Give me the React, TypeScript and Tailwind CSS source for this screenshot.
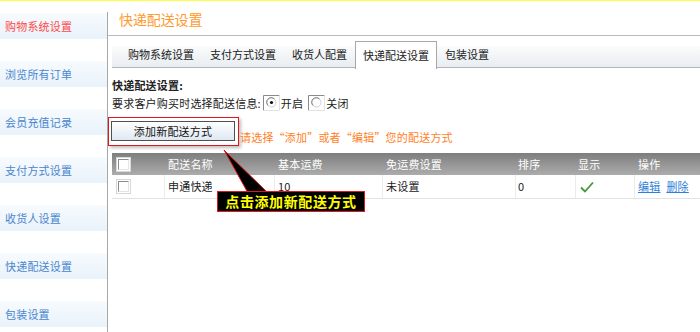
const font = { fontFamily: '"Noto Sans CJK SC", "Liberation Sans", sans-serif' };

const menu = ['购物系统设置', '浏览所有订单', '会员充值记录', '支付方式设置', '收货人设置', '快递配送设置', '包装设置'];
const tabs = ['购物系统设置', '支付方式设置', '收货人配置', '快递配送设置', '包装设置'];

function Radio({ on }: { on?: boolean }) {
  return (
    <svg width="17" height="16" viewBox="0 0 17 16" className="shrink-0">
      <rect x="0" y="0" width="17" height="16" fill="#fff" />
      <path d="M0.5 15.5V0.5H16.5" stroke="#8a8a8a" fill="none" />
      <path d="M16.5 0.5V15.5H0.5" stroke="#e2e2e2" fill="none" />
      <circle cx="8.5" cy="7.5" r="4.5" fill="#fff" stroke="#d0d0d0" />
      <path d="M5 10.5A4.5 4.5 0 0 1 11.5 4" stroke="#808080" fill="none" />
      {on && <circle cx="8.5" cy="7.5" r="1.6" fill="#111" />}
    </svg>
  );
}

function Check() {
  return (
    <span className="flex h-[15px] w-[15px] items-center justify-center border border-[#d8d8d8] bg-white">
      <span className="h-[11px] w-[11px] border border-[#8c8c8c] border-b-[#e4e4e4] border-r-[#e4e4e4] bg-white" />
    </span>
  );
}

export default function App() {
  return (
    <div className="relative h-[332px] w-[700px] overflow-hidden bg-white text-[11px] tracking-[0.2px] text-[#222]" style={font}>
      <div className="h-px bg-[#ffff40]" />
      <div className="flex">
        <div className="flex w-[107px] shrink-0 flex-col gap-[22px] pt-[12px]">
          {menu.map((m, i) => (
            <div
              key={m}
              className={`flex h-[26px] items-center bg-gradient-to-b from-[#f7fbfe] to-[#e9f2fa] pl-[5px] ${i === 0 ? 'text-[#ff4a4a]' : 'text-[#4a86cf]'}`}
            >
              {m}
            </div>
          ))}
        </div>
        <div className="mt-[11px] h-[320px] flex-1 border-l border-[#a8a8a8]">
          <div className="h-[24px] border-b border-[#bcbcbc] pl-[11px] text-[14px] leading-[14px] tracking-[-0.1px] text-[#ff9a2e]">
            快递配送设置
          </div>
          <div className="ml-[4px] mt-[5px] flex h-[27px] items-start border-b border-[#b4b4b4] bg-[linear-gradient(to_bottom,#fff_0,#fff_5px,#fafbfc_5px,#e9edf1_100%)] pl-[8px] tracking-normal">
            {tabs.map((t, i) =>
              i === 3 ? (
                <div key={t} className="flex h-[28px] items-center border border-b-0 border-[#a8a8a8] bg-white px-[7px] pb-px">
                  {t}
                </div>
              ) : (
                <div key={t} className="flex h-[26px] items-center px-[8px] pt-[1px]">
                  {t}
                </div>
              ),
            )}
          </div>
          <div className="pl-[4px] pt-[8px] leading-[18px]">
            <div className="font-bold">快递配送设置:</div>
            <div className="flex items-center">
              <span>要求客户购买时选择配送信息:</span>
              <span className="ml-[2px] flex items-center gap-[1px]">
                <Radio on />
                <span>开启</span>
              </span>
              <span className="ml-[5px] flex items-center gap-[1px]">
                <Radio />
                <span>关闭</span>
              </span>
            </div>
          </div>
          <div className="mt-[5px] flex items-start">
            <div className="h-[29px] w-[131px] border border-[#e0161c] pl-[2px] pr-[3px] pt-[3px] shadow-[2px_2px_3px_rgba(0,0,0,0.25)]">
              <div className="flex h-[20px] items-center justify-center border border-[#505050] bg-gradient-to-b from-[#ffffff] to-[#dfe8f2] text-[#111]">
                添加新配送方式
              </div>
            </div>
            <div className="ml-[1px] mt-[12px] leading-[16px] text-[#ff7f27]">请选择“添加”或者“编辑”您的配送方式</div>
          </div>
          <div className="ml-[4px] mt-[7px]">
            <div className="grid h-[22px] grid-cols-[53px_110px_108px_133px_60px_59px_1fr] items-center bg-gradient-to-b from-[#7e7e7e] to-[#acacac] text-white">
              <div className="pl-[4px]">
                <Check />
              </div>
              <div className="pl-[3px]">配送名称</div>
              <div className="pl-[3px]">基本运费</div>
              <div className="pl-[3px]">免运费设置</div>
              <div className="pl-[2px]">排序</div>
              <div className="pl-[2px]">显示</div>
              <div className="pl-[3px]">操作</div>
            </div>
            <div className="grid h-[24px] grid-cols-[53px_110px_108px_133px_60px_59px_1fr] border-b border-[#e2e2e2] text-[#222]">
              <div className="flex items-center border-r border-[#ececec] pl-[4px]">
                <Check />
              </div>
              <div className="flex items-center border-r border-[#ececec] pl-[3px]">申通快递</div>
              <div className="flex items-center border-r border-[#ececec] pl-[3px]">10</div>
              <div className="flex items-center border-r border-[#ececec] pl-[3px]">未设置</div>
              <div className="flex items-center border-r border-[#ececec] pl-[2px]">0</div>
              <div className="flex items-center border-r border-[#ececec] pl-[4px]">
                <svg width="14" height="12" viewBox="0 0 14 12">
                  <path d="M1 6.5L5 10.5L13 1.5" stroke="#3f9a3c" strokeWidth="1.8" fill="none" />
                </svg>
              </div>
              <div className="flex items-center gap-[6px] pl-[3px] text-[#2f7fd8] underline">
                <span>编辑</span>
                <span>删除</span>
              </div>
            </div>
          </div>
        </div>
      </div>
      <svg className="absolute left-0 top-0" width="700" height="332" viewBox="0 0 700 332" style={{ pointerEvents: 'none' }}>
        <polygon points="224,150 248,193 268,193" fill="#000" stroke="#e0161c" strokeWidth="1" />
      </svg>
      <div className="absolute left-[217px] top-[191px] flex h-[21px] w-[148px] items-center justify-center border border-[#e0161c] bg-black text-[14px] font-bold tracking-[0.6px] text-[#ffff00]">
        点击添加新配送方式
      </div>
    </div>
  );
}
